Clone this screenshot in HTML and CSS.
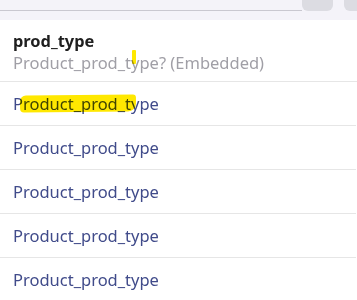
FILE: index.html
```html
<!DOCTYPE html>
<html lang="en">
<head>
  <meta charset="UTF-8" />
  <meta name="viewport" content="width=device-width, initial-scale=1.0" />
  <title>prod_type</title>
  <link rel="stylesheet" href="styles.css">
</head>
<body>
  <div class="topbar">
    <div class="search"></div>
    <span class="tool-btn"></span>
    <span class="tool-btn tool-btn-cut"></span>
  </div>
  <div class="field-head">
    <h2>prod_type</h2>
    <p class="field-sub">Product_prod_type? (Embedded)</p>
    <span class="mark mark-tick"></span>
  </div>
  <ul class="value-list">
    <li>Product_prod_type<span class="mark mark-stroke"></span></li>
    <li>Product_prod_type</li>
    <li>Product_prod_type</li>
    <li>Product_prod_type</li>
    <li>Product_prod_type</li>
  </ul>
</body>
</html>
```

FILE: styles.css
```css
* { box-sizing: border-box; margin: 0; padding: 0; }
body {
  font-family: 'Noto Sans', 'Open Sans', sans-serif;
  background: #fff;
  color: #222;
  overflow: hidden;
}
.topbar {
  height: 20px;
  background: #f4f3f9;
  display: flex;
  align-items: flex-start;
}
.search {
  flex: 1;
  height: 11px;
  border-bottom: 1px solid #c9c8d0;
}
.tool-btn {
  width: 31px;
  height: 11px;
  background: #dcdce2;
  border-radius: 0 0 6px 6px;
}
.tool-btn-cut { margin-left: 11px; width: 20px; margin-right: -7px; }
.field-head {
  position: relative;
  padding: 10px 13px 7px;
  border-bottom: 1px solid #e6e6e6;
}
.field-head h2 {
  font-size: 16.4px;
  font-weight: 700;
  color: #1f1f1f;
  line-height: 22px;
}
.field-sub {
  font-size: 16.5px;
  color: #a09fa6;
  line-height: 22px;
}
.value-list { list-style: none; }
.value-list li {
  position: relative;
  height: 44px;
  line-height: 43px;
  padding-left: 13px;
  font-size: 16.5px;
  color: #404b8a;
  border-bottom: 1px solid #e6e6e6;
  margin-right: 1px;
}
.mark {
  position: absolute;
  background: #ffe800;
  mix-blend-mode: multiply;
}
.mark-tick {
  left: 132px;
  top: 30px;
  width: 4px;
  height: 14px;
  border-radius: 1px;
}
.mark-stroke {
  left: 20px;
  top: 13px;
  width: 116px;
  height: 17px;
  border-radius: 6px 3px 8px 4px;
  transform: rotate(-0.6deg);
}
```
